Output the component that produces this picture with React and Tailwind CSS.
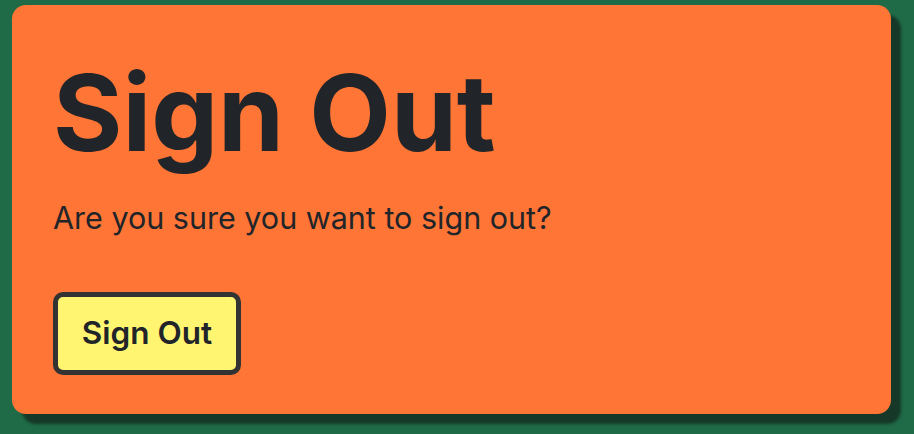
export default function App() {
  return (
    <div className="w-[914px] h-[434px] bg-[#1f6b47] pl-[12px] pt-[5px] overflow-hidden" style={{ fontFamily: 'Inter, "Noto Sans", sans-serif' }}>
      <div className="w-[879px] h-[409px] bg-[#ff7535] rounded-[14px] shadow-[10px_10px_3px_#163828] pl-[41px] pt-[55px] text-[#212529]">
        <h1 className="text-[106px] font-bold leading-none m-0">Sign Out</h1>
        <p className="text-[30.5px] leading-none mt-[37px]">Are you sure you want to sign out?</p>
        <button className="mt-[58px] w-[188px] h-[83px] bg-[#fff571] border-[5px] border-[#333] rounded-[10px] text-[31.5px] font-semibold leading-none text-[#212529]">Sign Out</button>
      </div>
    </div>
  );
}
